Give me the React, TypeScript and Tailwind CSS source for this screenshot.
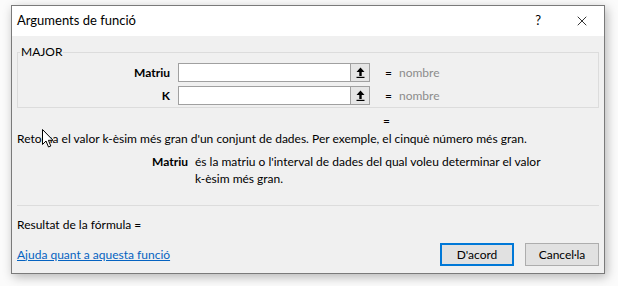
import { X } from "lucide-react";

function RefButton() {
  return (
    <div className="w-[20px] h-full border border-[#a0a0a0] bg-[#e6e6e6] flex items-center justify-center">
      <svg width="9" height="11" viewBox="0 0 9 11">
        <path d="M4.5 0.5 L8.5 5 L5.7 5 L5.7 9 L3.3 9 L3.3 5 L0.5 5 Z" fill="#000" />
        <rect x="0.5" y="9.8" width="8" height="1.2" fill="#000" />
      </svg>
    </div>
  );
}

function ArgRow({ label }: { label: string }) {
  return (
    <div className="flex items-center h-[19px]">
      <div className="w-[160px] text-right font-bold pr-[8px]">{label}</div>
      <div className="flex h-[19px]">
        <div className="w-[172px] h-full bg-white border border-[#a0a0a0] border-r-0" />
        <RefButton />
      </div>
      <div className="ml-[15px]">=</div>
      <div className="ml-[7px] text-[#8c8c8c]">nombre</div>
    </div>
  );
}

export default function App() {
  return (
    <div
      className="relative w-[618px] h-[286px] bg-[#fbfbfb] pt-[5px] pl-[11px] text-[12px] text-black"
      style={{ fontFamily: "Lato, 'Noto Sans', sans-serif" }}
    >
      <div className="w-[594px] h-[269px] border border-[#7a7a7a] bg-[#f0f0f0] shadow-[2px_3px_10px_rgba(0,0,0,0.28)] flex flex-col overflow-hidden">
        <div className="h-[30px] shrink-0 bg-white flex items-center pl-[5px] pr-[14px]">
          <div className="flex-1 text-[13px]">Arguments de funció</div>
          <div className="text-[13px] mr-[33px]">?</div>
          <X size={16} strokeWidth={1.2} />
        </div>

        <div className="flex flex-col px-[5px] pt-[10px]">
          <fieldset className="border border-[#dcdcdc] pt-[0px] pb-[4px] h-[62px] shrink-0">
            <legend className="ml-[2px] px-[1px] leading-[12px]">MAJOR</legend>
            <div className="flex flex-col gap-[4px] mt-[5px]">
              <ArgRow label="Matriu" />
              <ArgRow label="K" />
            </div>
          </fieldset>

          <div className="pl-[366px] leading-[14px] mt-[6px]">=</div>
          <div className="mt-[3px] leading-[16px]">
            Retorna el valor k-èsim més gran d'un conjunt de dades. Per exemple, el cinquè número més gran.
          </div>
          <div className="flex mt-[6px] leading-[17px]">
            <div className="w-[178px] text-right font-bold pr-[7px] shrink-0">Matriu</div>
            <div className="w-[352px]">
              és la matriu o l'interval de dades del qual voleu determinar el valor k-èsim més gran.
            </div>
          </div>

          <div className="mt-[18px] border-t border-[#dcdcdc]" />
          <div className="mt-[11px] leading-[16px]">Resultat de la fórmula =</div>

          <div className="flex items-center mt-[10px]">
            <a href="#" className="flex-1 text-[#0563c1] underline">
              Ajuda quant a aquesta funció
            </a>
            <button className="w-[74px] h-[23px] border-2 border-[#0078d7] bg-[#e1e1e1]">D'acord</button>
            <button className="ml-[11px] w-[74px] h-[23px] border border-[#adadad] bg-[#e1e1e1]">Cancel·la</button>
          </div>
        </div>
      </div>

      <svg className="absolute left-[42px] top-[129px]" width="12" height="19" viewBox="0 0 12 19">
        <path
          d="M0.5 0.5 L0.5 15.5 L4 12 L6.5 18 L8.8 17 L6.4 11.3 L11 11.3 Z"
          fill="#fff"
          stroke="#000"
          strokeWidth="1"
          strokeLinejoin="round"
        />
      </svg>
    </div>
  );
}
